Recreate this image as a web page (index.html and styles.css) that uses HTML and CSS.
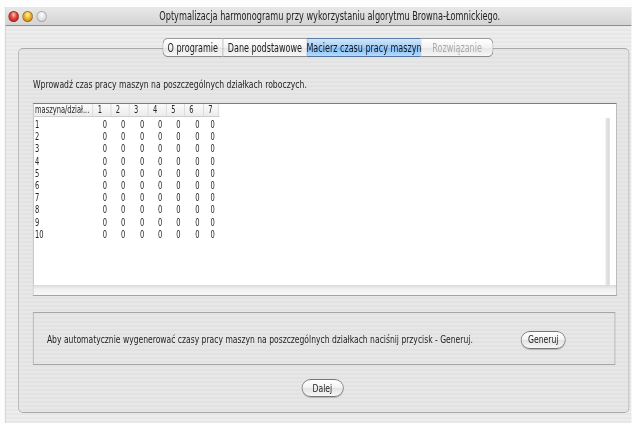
FILE: index.html
```html
<!DOCTYPE html>
<html lang="pl">
<head>
<meta charset="utf-8">
<title>Optymalizacja harmonogramu</title>
<link rel="stylesheet" href="styles.css">
</head>
<body>
<div class="screen">
  <div class="window">
    <div class="titlebar">
      <div class="lights">
        <span class="light red"></span>
        <span class="light yellow"></span>
        <span class="light grey"></span>
      </div>
      <div class="title">Optymalizacja harmonogramu przy wykorzystaniu algorytmu Browna-Łomnickiego.</div>
    </div>
    <div class="content">
      <div class="tabs">
        <span class="tab first w1">O programie</span>
        <span class="tab w2">Dane podstawowe</span>
        <span class="tab selected w3">Macierz czasu pracy maszyn</span>
        <span class="tab last disabled w4">Rozwiązanie</span>
      </div>
      <div class="panel">
        <p class="intro">Wprowadź czas pracy maszyn na poszczególnych działkach roboczych.</p>
        <div class="scrollpane">
          <div class="viewport">
            <table class="grid">
              <colgroup>
                <col class="c0"><col class="c1"><col class="c1"><col class="c2"><col class="c1"><col class="c1"><col class="c2"><col class="c3">
              </colgroup>
              <thead>
                <tr><th class="name">maszyna/dział...</th><th>1</th><th>2</th><th>3</th><th>4</th><th>5</th><th>6</th><th>7</th></tr>
              </thead>
              <tbody>
                <tr class="first-row"><td class="name">1</td><td>0</td><td>0</td><td>0</td><td>0</td><td>0</td><td>0</td><td>0</td></tr>
                <tr><td class="name">2</td><td>0</td><td>0</td><td>0</td><td>0</td><td>0</td><td>0</td><td>0</td></tr>
                <tr><td class="name">3</td><td>0</td><td>0</td><td>0</td><td>0</td><td>0</td><td>0</td><td>0</td></tr>
                <tr><td class="name">4</td><td>0</td><td>0</td><td>0</td><td>0</td><td>0</td><td>0</td><td>0</td></tr>
                <tr><td class="name">5</td><td>0</td><td>0</td><td>0</td><td>0</td><td>0</td><td>0</td><td>0</td></tr>
                <tr><td class="name">6</td><td>0</td><td>0</td><td>0</td><td>0</td><td>0</td><td>0</td><td>0</td></tr>
                <tr><td class="name">7</td><td>0</td><td>0</td><td>0</td><td>0</td><td>0</td><td>0</td><td>0</td></tr>
                <tr><td class="name">8</td><td>0</td><td>0</td><td>0</td><td>0</td><td>0</td><td>0</td><td>0</td></tr>
                <tr><td class="name">9</td><td>0</td><td>0</td><td>0</td><td>0</td><td>0</td><td>0</td><td>0</td></tr>
                <tr><td class="name">10</td><td>0</td><td>0</td><td>0</td><td>0</td><td>0</td><td>0</td><td>0</td></tr>
              </tbody>
            </table>
            <div class="vtrack"></div>
          </div>
          <div class="htrack"></div>
        </div>
        <div class="genbox">
          <span class="gentext">Aby automatycznie wygenerować czasy pracy maszyn na poszczególnych działkach naciśnij przycisk - Generuj.</span>
          <button class="pill gen">Generuj</button>
        </div>
        <div class="footer">
          <button class="pill next">Dalej</button>
        </div>
      </div>
    </div>
  </div>
</div>
</body>
</html>
```
FILE: styles.css
```css
html, body {
  margin: 0;
  padding: 0;
  background: #fdfdfd;
}

body {
  width: 632px;
  height: 423px;
  overflow: hidden;
  font-family: "DejaVu Sans", "Liberation Sans", sans-serif;
  color: #1e1e1e;
}

/* The window is drawn in a wide layout space and condensed horizontally,
   like an Aqua window rendered with a narrow aspect. */
.screen {
  width: 902px;
  transform: scaleX(0.7);
  transform-origin: 0 0;
}

.window {
  margin: 7px 0 0 7px;
  height: 416px;
  background: repeating-linear-gradient(to bottom, #ededed 0, #ededed 2px, #e7e7e7 2px, #e7e7e7 4px);
  border-left: 1px solid #c4c4c4;
}

/* title bar */
.titlebar {
  height: 18px;
  display: flex;
  align-items: center;
  background: linear-gradient(to bottom, #e8e8e8, #d4d4d4);
  border-bottom: 1px solid #8e8e8e;
}

.lights {
  display: flex;
  gap: 5px;
  padding-left: 4px;
}

.light {
  width: 15px;
  height: 11px;
  border-radius: 50%;
  box-sizing: border-box;
}

.red {
  background: radial-gradient(ellipse at 50% 30%, #ffc4bc 0, #e5453a 45%, #a3120c 100%);
  border: 1px solid #8d2a24;
}

.yellow {
  background: radial-gradient(ellipse at 50% 30%, #fff2b8 0, #f1b62d 45%, #b26f07 100%);
  border: 1px solid #9a6a1a;
}

.grey {
  background: radial-gradient(ellipse at 50% 30%, #ffffff 0, #e4e4e4 50%, #bdbdbd 100%);
  border: 1px solid #a8a8a8;
}

.title {
  flex: 1;
  text-align: center;
  font-size: 11.7px;
  color: #222;
  padding-right: 27px;
  filter: grayscale(1);
}

/* tabs */
.content {
  padding-top: 12px;
}

.tabs {
  display: flex;
  position: relative;
  z-index: 1;
  height: 19px;
  margin-left: 224px;
}

.tab {
  display: flex;
  align-items: center;
  justify-content: center;
  box-sizing: border-box;
  font-size: 11.5px;
  background: linear-gradient(to bottom, #ffffff, #f2f2f2 50%, #e6e6e6 51%, #f6f6f6);
  border-top: 1px solid #9a9a9a;
  border-bottom: 1px solid #8a8a8a;
  border-left: 1px solid #b4b4b4;
  white-space: nowrap;
  filter: grayscale(1);
}

.w1 { width: 86px; }
.w2 { width: 120px; }
.w3 { width: 163px; }
.w4 { width: 104px; }

.tab.first {
  border-left: 1px solid #8a8a8a;
  border-radius: 7px 0 0 7px;
}

.tab.last {
  border-right: 1px solid #8a8a8a;
  border-radius: 0 7px 7px 0;
}

.tab.selected {
  background: linear-gradient(to bottom, #d2e6fa, #a2ccf4 50%, #80baf0 51%, #b8dbfb);
  border-top-color: #5a7fa8;
  border-bottom-color: #4f74a0;
  border-left-color: #6a8fb5;
  color: #101828;
  filter: none;
}

.tab.disabled {
  color: #ababab;
}

.panel {
  margin: -9px 0 0 18px;
  width: 873px;
  height: 365px;
  box-sizing: border-box;
  border: 1px solid #a9a9a9;
  border-radius: 7px / 5px;
  background: rgba(0, 0, 0, 0.022);
  padding: 29px 0 0 20px;
  display: flex;
  flex-direction: column;
  filter: grayscale(1);
}

.intro {
  margin: 0;
  font-size: 11px;
  line-height: 14px;
  height: 25px;
}

/* table in scroll pane */
.scrollpane {
  width: 834px;
  height: 193px;
  box-sizing: border-box;
  border: 1px solid #a4a4a4;
  border-top-color: #7d7d7d;
  background: #fff;
  display: flex;
  flex-direction: column;
}

.viewport {
  flex: 1;
  position: relative;
}

.grid {
  border-collapse: collapse;
  table-layout: fixed;
  width: 264px;
  font-size: 9.6px;
  color: #262626;
}

.c0 { width: 84px; }
.c1 { width: 26px; }
.c2 { width: 27px; }
.c3 { width: 22px; }

.grid th {
  height: 12px;
  padding: 0 0 0 7px;
  font-weight: normal;
  text-align: left;
  background: linear-gradient(to bottom, #fbfbfb, #ececec);
  border-right: 1px solid #cdcdcd;
  border-bottom: 1px solid #cdcdcd;
  white-space: nowrap;
  overflow: hidden;
  line-height: 12px;
}

.grid th.name {
  padding-left: 2px;
}

.grid td {
  height: 12.2px;
  padding: 0 5px 0 0;
  text-align: right;
  line-height: 12px;
}

.grid td.name {
  text-align: left;
  padding-left: 2px;
}

.grid tr.first-row td {
  padding-top: 2px;
}

.vtrack {
  position: absolute;
  right: 9px;
  top: 14px;
  bottom: 0;
  width: 6px;
  background: linear-gradient(to right, #e8e8e8, #d6d6d6);
}

.htrack {
  height: 10px;
  background: linear-gradient(to bottom, #d9d9d9, #f1f1f1 40%, #f7f7f7);
}

/* generate box */
.genbox {
  margin-top: 16px;
  width: 832px;
  height: 53px;
  box-sizing: border-box;
  border: 1px solid #a6a6a6;
  display: flex;
  align-items: center;
  padding: 2px 0 0 19px;
}

.gentext {
  font-size: 10.9px;
  flex: 1;
}

.pill {
  font-family: inherit;
  font-size: 11px;
  color: #1e1e1e;
  height: 18px;
  padding: 0;
  border-radius: 13px / 9px;
  border: 1px solid #777;
  background: linear-gradient(to bottom, #ffffff, #f2f2f2 50%, #e3e3e3 51%, #f7f7f7);
  box-shadow: 0 1px 1px rgba(0, 0, 0, 0.2);
}

.gen {
  width: 64px;
  margin-right: 70px;
}

.next {
  width: 60px;
}

.footer {
  display: flex;
  justify-content: center;
  padding: 14px 24px 0 0;
}
```
